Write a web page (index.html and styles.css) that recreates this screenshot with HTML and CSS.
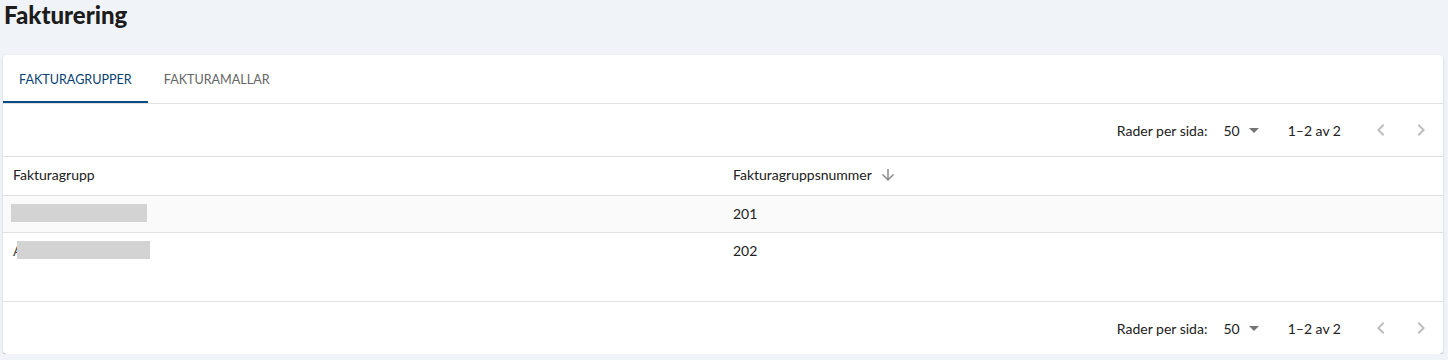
FILE: index.html
```html
<!DOCTYPE html>
<html lang="sv">
<head>
  <meta charset="UTF-8" />
  <title>Fakturering</title>
  <link rel="stylesheet" href="styles.css">
</head>
<body>
  <div class="page">
    <h1 class="page-title">Fakturering</h1>

    <div class="card">
      <div class="tabs">
        <div class="tab active">Fakturagrupper</div>
        <div class="tab">Fakturamallar</div>
      </div>

      <div class="pager">
        <span class="pager-label">Rader per sida:</span>
        <span class="pager-select">50
          <svg width="10" height="5" viewBox="0 0 10 5"><path d="M0 0h10L5 5z" fill="#757575"/></svg>
        </span>
        <span class="pager-range">1–2 av 2</span>
        <span class="pager-btn">
          <svg width="24" height="24" viewBox="0 0 24 24"><path d="M15.4 7.4 14 6l-6 6 6 6 1.4-1.4L10.8 12z" fill="#bdbdbd"/></svg>
        </span>
        <span class="pager-btn">
          <svg width="24" height="24" viewBox="0 0 24 24"><path d="M10 6 8.6 7.4 13.2 12l-4.6 4.6L10 18l6-6z" fill="#bdbdbd"/></svg>
        </span>
      </div>

      <div class="table">
        <div class="row head">
          <div class="cell">Fakturagrupp</div>
          <div class="cell">Fakturagruppsnummer
            <svg class="sort" width="18" height="18" viewBox="0 0 24 24"><path d="m20 12-1.41-1.41L13 16.17V4h-2v12.17l-5.58-5.59L4 12l8 8 8-8z" fill="#8a8a8a"/></svg>
          </div>
        </div>
        <div class="row striped">
          <div class="cell"><span class="redacted"></span></div>
          <div class="cell">201</div>
        </div>
        <div class="row last">
          <div class="cell"><span class="stub">A</span><span class="redacted second"></span></div>
          <div class="cell">202</div>
        </div>
      </div>

      <div class="pager bottom">
        <span class="pager-label">Rader per sida:</span>
        <span class="pager-select">50
          <svg width="10" height="5" viewBox="0 0 10 5"><path d="M0 0h10L5 5z" fill="#757575"/></svg>
        </span>
        <span class="pager-range">1–2 av 2</span>
        <span class="pager-btn">
          <svg width="24" height="24" viewBox="0 0 24 24"><path d="M15.4 7.4 14 6l-6 6 6 6 1.4-1.4L10.8 12z" fill="#bdbdbd"/></svg>
        </span>
        <span class="pager-btn">
          <svg width="24" height="24" viewBox="0 0 24 24"><path d="M10 6 8.6 7.4 13.2 12l-4.6 4.6L10 18l6-6z" fill="#bdbdbd"/></svg>
        </span>
      </div>
    </div>
  </div>
</body>
</html>
```

FILE: styles.css
```css
body {
  margin: 0;
  background-color: #f0f3f8;
  font-family: 'Lato', 'Liberation Sans', sans-serif;
  color: #212121;
}

.page {
  padding: 0 5px 0 3px;
}

.page-title {
  margin: 0;
  padding: 0 0 0 1px;
  height: 55px;
  font-size: 24px;
  font-weight: 900;
  line-height: 30px;
  color: #1c1c1c;
}

.card {
  background: #fff;
  border-radius: 4px;
  box-shadow: 0 2px 1px -1px rgba(0,0,0,0.2), 0 1px 1px 0 rgba(0,0,0,0.14), 0 1px 3px 0 rgba(0,0,0,0.12);
}

.tabs {
  display: flex;
  height: 48px;
  border-bottom: 1px solid #e0e0e0;
}

.tab {
  display: flex;
  align-items: center;
  padding: 0 16px;
  font-size: 12.6px;
  text-transform: uppercase;
  color: #666;
}

.tab.active {
  color: #0b3f73;
  box-shadow: inset 0 -2px 0 #0a4a85;
}

.pager {
  display: flex;
  align-items: center;
  justify-content: flex-end;
  height: 52px;
  padding-right: 2px;
  border-bottom: 1px solid #e0e0e0;
  font-size: 14px;
  color: #212121;
}

.pager.bottom {
  border-bottom: none;
  border-top: 1px solid #e0e0e0;
}

.pager-select {
  display: flex;
  align-items: center;
  gap: 9px;
  margin-left: 16px;
}

.pager-range {
  margin-left: 29px;
  margin-right: 20px;
}

.pager-btn {
  display: flex;
  padding: 8px;
}

.table {
  height: 144px;
}

.row {
  display: grid;
  grid-template-columns: 720px 1fr;
  height: 36px;
  border-bottom: 1px solid #e0e0e0;
  font-size: 14px;
}

.row.head {
  height: 38px;
}

.row.head .cell {
  padding-bottom: 3px;
}

.row.striped {
  background: #fafafa;
}

.row.striped .cell,
.row.last .cell {
  padding-bottom: 2px;
}

.row.last {
  border-bottom: none;
}

.cell {
  display: flex;
  align-items: center;
  padding-left: 10px;
}

.sort {
  margin-left: 7px;
}

.redacted {
  display: block;
  width: 136px;
  height: 18px;
  margin-left: -2px;
  background: #d3d3d3;
}

.stub {
  color: #444;
}

.redacted.second {
  width: 133px;
  margin-left: -5px;
}
```
